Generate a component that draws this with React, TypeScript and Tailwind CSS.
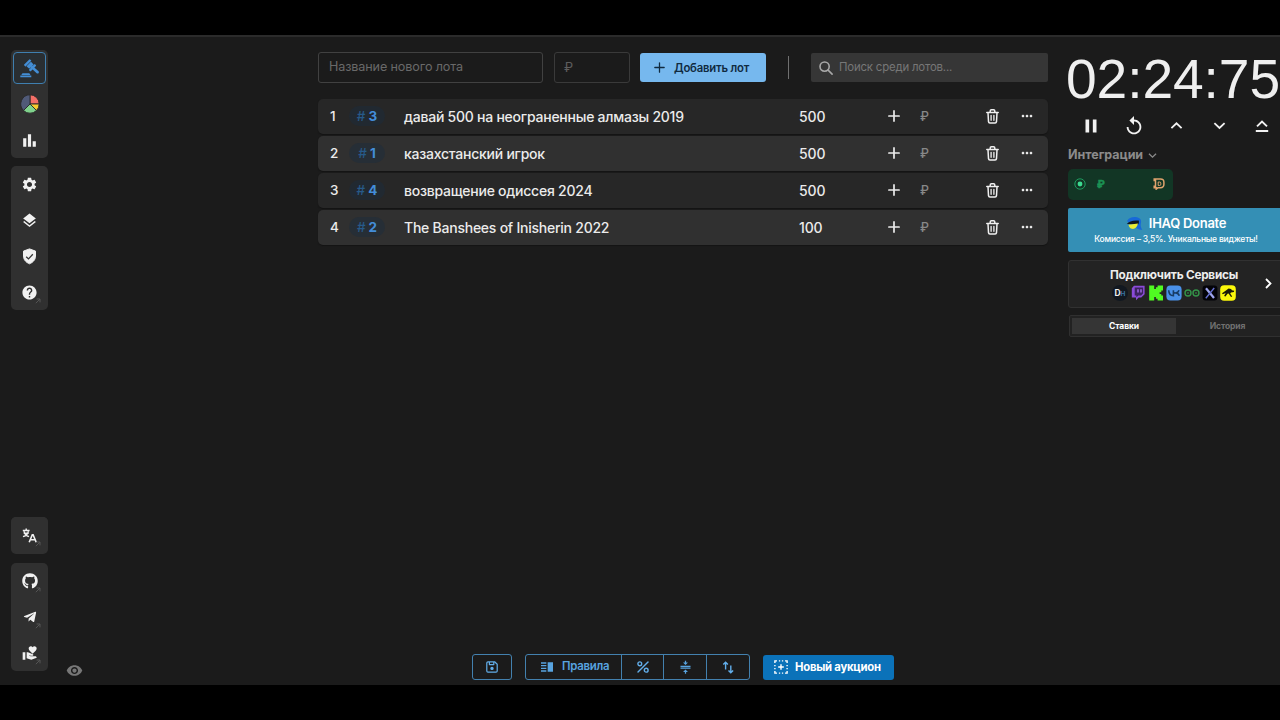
import React from "react";
import {
  MdBarChart, MdSettings, MdLayers, MdHelp, MdVolunteerActivism,
  MdVisibility, MdMoreHoriz, MdPause, MdReplay, MdVerticalSplit, MdCompress,
} from "react-icons/md";
import { FaGithub, FaTelegramPlane } from "react-icons/fa";

const lots = [
  { pos: 1, id: 3, name: "давай 500 на неограненные алмазы 2019", sum: 500 },
  { pos: 2, id: 1, name: "казахстанский игрок", sum: 500 },
  { pos: 3, id: 4, name: "возвращение одиссея 2024", sum: 500 },
  { pos: 4, id: 2, name: "The Banshees of Inisherin 2022", sum: 100 },
];

function GavelIcon() {
  return (
    <svg width="19" height="19" viewBox="0 0 19 19" fill="currentColor">
      <g transform="rotate(45 9.5 7)">
        <rect x="4.700" y="1.900" width="2.400" height="8.400" rx=".6" />
        <rect x="7.500" y="3" width="3.800" height="6.200" />
        <rect x="11.700" y="1.900" width="2.400" height="8.400" rx=".6" transform="translate(0 0)" />
      </g>
      <path d="m10.300 8.200 1.700-1.700 6.300 5.600c.8.800.7 1.600.2 2.100s-1.300.6-2.100-.1Z" />
      <path d="M2.500 14.300h6.800l1.200 1.600H1.300ZM.3 16.500h11v1.700H.3Z" />
    </svg>
  );
}

function TranslateIcon() {
  return (
    <svg width="15" height="15" viewBox="0 0 15 15" fill="none" stroke="currentColor" strokeWidth="1.400">
      <path d="M.8 2.500h6.800M4.200.5v2M2 3.300c.5 2.700 2.300 4.400 5 5.400M6.400 3.300c-.5 2.700-2.600 4.400-5.400 5.400M1.700 5.200h5" />
      <path d="M7.200 14.300 10.300 6.700h.8l3.100 7.600M8.200 11.800h5" strokeWidth="1.600" />
    </svg>
  );
}

function PieIcon() {
  return (
    <svg width="20" height="20" viewBox="0 0 20 20" stroke="#292929" strokeWidth="0.9">
      <path d="M10 10V.8A9.2 9.2 0 0 1 19.2 10Z" fill="#f36f67" />
      <path d="M10 10h9.2a9.2 9.2 0 0 1-2.7 6.5Z" fill="#f6cb2e" />
      <path d="M10 10l6.5 6.500a9.200 9.200 0 0 1-13 0Z" fill="#7fd28c" />
      <path d="M10 10L3.500 16.500A9.200 9.200 0 0 1 10 .8Z" fill="#505a78" />
    </svg>
  );
}

function ShieldIcon() {
  return (
    <svg width="15" height="17" viewBox="0 0 15 17">
      <path d="M7.500.9 13.500 3.100v5c0 3.500-2.400 6.300-6 7.700-3.600-1.400-6-4.200-6-7.700v-5Z" fill="#f1f1f1" stroke="#f1f1f1" strokeLinejoin="round" />
      <path d="m4.200 8.700 2.300 2.200 4.300-4.600" fill="none" stroke="#333" strokeWidth="1.300" />
    </svg>
  );
}

function PlusIcon({ size = 12, width = 1.700 }: { size?: number; width?: number }) {
  return (
    <svg className="shrink-0" width={size} height={size} viewBox="0 0 12 12" fill="none" stroke="currentColor" strokeWidth={width} strokeLinecap="round">
      <path d="M6 .9v10.200M.9 6h10.200" />
    </svg>
  );
}

function SearchIcon() {
  return (
    <svg width="14" height="14" viewBox="0 0 14 14" fill="none" stroke="#a8a8a8" strokeWidth="1.600" strokeLinecap="round">
      <circle cx="5.600" cy="5.600" r="4.600" />
      <path d="m9.100 9.100 4 4" />
    </svg>
  );
}

function Chevron({ up, size = 14, width = 2 }: { up?: boolean; size?: number; width?: number }) {
  return (
    <svg className="shrink-0" width={size} height={size} viewBox="0 0 14 14" fill="none" stroke="currentColor" strokeWidth={width}>
      <path d={up ? "m1.500 9.800 5.500-5.200 5.500 5.200" : "m1.500 4.400 5.500 5.200 5.500-5.200"} />
    </svg>
  );
}

function TrashIcon() {
  return (
    <svg className="shrink-0" width="13" height="15" viewBox="0 0 13 15" fill="none" stroke="#f0f0f0" strokeWidth="1.500" strokeLinecap="round" strokeLinejoin="round">
      <path d="M.8 3.500h11.400M4.200 3.300V2c0-.8.500-1.200 1.200-1.200h2.200c.7 0 1.200.4 1.200 1.200v1.300M2 3.700l.5 9c.1.900.6 1.400 1.400 1.400h5.200c.8 0 1.300-.5 1.400-1.400l.5-9" />
      <path d="M5.100 6.300v5M7.900 6.300v5" strokeWidth="1.300" />
    </svg>
  );
}

function SaveIcon() {
  return (
    <svg width="12" height="12" viewBox="0 0 12 12" fill="none" stroke="#62aeea" strokeWidth="1.200" strokeLinejoin="round">
      <path d="M2 .8h6.600l2.600 2.400V10c0 .8-.4 1.200-1.200 1.200H2c-.8 0-1.200-.4-1.200-1.200V2C.8 1.200 1.200.8 2 .8Z" />
      <path d="M3.400 1v2.600h4.400V1" />
      <circle cx="6" cy="7.400" r="1.100" fill="#62aeea" />
    </svg>
  );
}

function PercentIcon() {
  return (
    <svg width="12" height="12" viewBox="0 0 12 12" fill="none" stroke="#62aeea" strokeWidth="1.400" strokeLinecap="round">
      <path d="M11 1 1 11" />
      <circle cx="2.800" cy="2.800" r="1.900" />
      <circle cx="9.200" cy="9.200" r="1.900" />
    </svg>
  );
}

function SortIcon() {
  return (
    <svg width="12" height="13" viewBox="0 0 12 13" fill="none" stroke="#62aeea" strokeWidth="1.400">
      <path d="M3.600 8.400V1.400M1.300 3.600l2.300-2.400 2.300 2.400M8.800 4.600v7M6.500 9.400l2.300 2.400 2.300-2.400" />
    </svg>
  );
}

function SelectPlusIcon() {
  return (
    <svg width="14" height="14" viewBox="0 0 14 14" fill="none" stroke="#fff" strokeWidth="1.400">
      <path d="M.9 3V.9H3M11 .9h2.100V3M13.100 11v2.100H11M3 13.100H.9V11M4.900.9h1.300M7.900.9h1.300M4.900 13.100h1.300M7.900 13.100h1.300M.9 4.900v1.300M.9 7.900v1.300M13.100 4.900v1.300M13.100 7.900v1.300M7 4.200v5.600M4.200 7h5.600" />
    </svg>
  );
}

function TopIcon() {
  return (
    <svg width="14" height="14" viewBox="0 0 14 14" fill="none" stroke="#f2f2f2" strokeWidth="1.900">
      <path d="m2 7.400 5-4.800 5 4.800M.8 12h12.400" />
    </svg>
  );
}

function NavItem({ children, active, hint }: { children: React.ReactNode; active?: boolean; hint?: boolean }) {
  return (
    <button
      className={
        active
          ? "relative flex h-8 w-[33px] items-center justify-center rounded-[4px] border border-[#3f7fb0] bg-[#292e32] text-[#438ed6]"
          : "relative flex h-8 w-[33px] items-center justify-center text-[#f1f1f1]"
      }
    >
      {children}
      {hint && (
        <svg className="absolute right-[5px] bottom-[4px]" width="6" height="6" viewBox="0 0 6 6" fill="none" stroke="#555">
          <path d="M.8 5.200 5 1M1.600 1H5v3.400" />
        </svg>
      )}
    </button>
  );
}

function NavGroup({ children }: { children: React.ReactNode }) {
  return <div className="flex w-[37px] flex-col items-center gap-1 rounded-[5px] bg-[#303030] py-[2px]">{children}</div>;
}

function Sidebar() {
  return (
    <nav className="flex w-[59px] flex-col pt-[13px] pb-[14px] pl-[11px]">
      <NavGroup>
        <NavItem active><GavelIcon /></NavItem>
        <NavItem><PieIcon /></NavItem>
        <NavItem><MdBarChart size={19} /></NavItem>
      </NavGroup>
      <div className="mt-[8px]">
        <NavGroup>
          <NavItem><MdSettings size={17} /></NavItem>
          <NavItem><MdLayers size={17} /></NavItem>
          <NavItem><ShieldIcon /></NavItem>
          <NavItem hint><MdHelp size={17} /></NavItem>
        </NavGroup>
      </div>
      <div className="mt-auto mb-[9px] rounded-[5px] bg-[#303030] pb-px w-[37px]">
        <NavGroup><NavItem hint><TranslateIcon /></NavItem></NavGroup>
      </div>
      <NavGroup>
        <NavItem hint><FaGithub size={16} /></NavItem>
        <NavItem hint><FaTelegramPlane size={14} /></NavItem>
        <NavItem hint><MdVolunteerActivism size={16} /></NavItem>
      </NavGroup>
    </nav>
  );
}

function LotForm() {
  return (
    <div className="flex h-[31px] items-center text-[13px]">
      <div className="flex h-[31px] w-[225px] items-center rounded-[3px] border border-[#414141] pl-[10px] text-[12.600px] tracking-[-0.120px] text-[#696969]">Название нового лота</div>
      <div className="ml-[11px] flex h-[31px] w-[76px] items-center rounded-[3px] border border-[#3a3a3a] pt-px pl-[9px] text-[#5e5e5e]">₽</div>
      <button className="ml-[10px] flex h-[29px] w-[126px] items-center rounded-[3px] bg-[#76b8ee] pl-[14px] text-[11.300px] font-semibold tracking-[-0.200px] text-[#102a40]">
        <PlusIcon size={11} width={1.400} /><span className="ml-[9px] pt-px whitespace-nowrap">Добавить лот</span>
      </button>
      <div className="ml-[22px] h-[23px] w-px bg-[#707070]" />
      <div className="ml-[22px] flex h-[29px] w-[237px] items-center rounded-[2px] bg-[#363636] pl-[8px] text-[11.400px] tracking-[-0.180px] text-[#777]">
        <SearchIcon /><span className="ml-[6px]">Поиск среди лотов...</span>
      </div>
    </div>
  );
}

function LotRow({ lot, alt }: { lot: (typeof lots)[number]; alt: boolean }) {
  return (
    <li
      className={
        alt
          ? "flex h-[35px] items-center rounded-[5px] bg-[#303030] pb-px text-[14px] font-medium text-[#ebebeb] shadow-[0_1px_1px_#141414]"
          : "flex h-[35px] items-center rounded-[5px] bg-[#272727] pb-px text-[14px] font-medium text-[#ebebeb] shadow-[0_1px_1px_#141414]"
      }
    >
      <span className="w-[31px] pl-[12px] text-[13.500px]">{lot.pos}</span>
      <span className="flex h-5 w-[36px] items-center justify-center gap-[3px] rounded-full bg-[#1c2c3b]/50 text-[13.500px]">
        <span className="text-[#275a89]">#</span>
        <span className="font-bold text-[#438dd9]">{lot.id}</span>
      </span>
      <span className="ml-[19px] w-[395px] tracking-[-0.240px] whitespace-nowrap">{lot.name}</span>
      <span className="w-[89px] tracking-[-0.150px]">{lot.sum}</span>
      <PlusIcon />
      <span className="ml-[20px] w-[66px] pt-[2px] text-[12.500px] text-[#888]">₽</span>
      <TrashIcon />
      <MdMoreHoriz size={16} className="ml-[20px] shrink-0" />
    </li>
  );
}

function BottomBar() {
  return (
    <div className="mt-auto flex h-[26px] w-[422px] items-center self-center text-[12.500px] font-semibold text-[#58a4e0]">
      <button className="flex h-[26px] w-[40px] items-center justify-center rounded-[3px] border border-[#4381af]"><SaveIcon /></button>
      <div className="ml-[13px] flex h-[26px] w-[225px] divide-x divide-[#4381af] rounded-[3px] border border-[#4381af]">
        <button className="flex w-[96px] items-center pl-[13px]"><MdVerticalSplit size={16} /><span className="ml-[7px] text-[11.400px] tracking-[-0.250px]">Правила</span></button>
        <button className="flex w-[42px] items-center justify-center"><PercentIcon /></button>
        <button className="flex w-[43px] items-center justify-center"><MdCompress size={15} stroke="currentColor" strokeWidth={0} /></button>
        <button className="flex flex-1 items-center justify-center"><SortIcon /></button>
      </div>
      <button className="ml-[13px] flex h-[25px] w-[131px] items-center rounded-[3px] bg-[#0b72b9] pl-[11px] text-[11.300px] font-bold tracking-[-0.240px] text-white">
        <SelectPlusIcon /><span className="ml-[7px] whitespace-nowrap">Новый аукцион</span>
      </button>
    </div>
  );
}

function ServiceIcons() {
  return (
    <div className="flex items-center gap-[2px]">
      <svg width="16" height="16" viewBox="0 0 16 16"><circle cx="8" cy="8" r="8" fill="#121820" /><text x="2.500" y="11" fontSize="8.500" fontWeight="700" fontFamily="Inter, sans-serif" fill="#eee">D</text><text x="8.600" y="10.700" fontSize="6.500" fontWeight="700" fontFamily="Inter, sans-serif" fill="#3973a5">H</text></svg>
      <svg width="16" height="16" viewBox="0 0 16 16"><path d="M4 .8h10.600v8.500l-3.400 3.300H8.700L6 15.200v-2.600H1.800V3.200Z" fill="#8b4bd8" /><path d="M4.700 2.400h8.400v6.200l-2 1.900H8.400l-2 1.800v-1.800H4.700Z" fill="#3c2360" /><path d="M8 4.300v3.300M11 4.300v3.300" stroke="#a66bee" strokeWidth="1.400" /></svg>
      <svg width="16" height="16" viewBox="0 0 16 16"><path d="M1.200.5h5v3.400h1.700V2.200h1.700V.5H15v5h-1.700v1.700h-1.700v1.700h1.700v1.600H15v5H9.600v-1.700H7.900v-1.700H6.200v3.400h-5Z" fill="#50fa22" /></svg>
      <svg width="16" height="16" viewBox="0 0 16 16"><rect x=".4" y=".4" width="15.200" height="15.200" rx="4" fill="#4a91e9" /><path d="M2.700 5.200c.2 3.400 1.900 5.500 4.700 5.500V5.200M13 5.200c-.5 1.500-1.700 2.600-3 2.700-.8.1-1.700 0-2.600 0M10 7.900c1.500.1 2.700 1.300 3.300 2.900" fill="none" stroke="#183c65" strokeWidth="1.600" /></svg>
      <svg width="16" height="16" viewBox="0 0 16 16" fill="none" stroke="#349449" strokeWidth="1.400"><circle cx="4" cy="8" r="3" /><circle cx="12" cy="8" r="3" /><path d="M3 8h2M11 8h2" strokeWidth="1" /></svg>
      <svg width="16" height="16" viewBox="0 0 16 16"><rect x=".6" y=".6" width="14.800" height="14.800" rx="3" fill="#030308" /><path d="m4 3.200 8 9.800" stroke="#9fa6ef" strokeWidth="2.200" /><path d="m12.200 3-8.400 10.200" stroke="#6670d2" strokeWidth="1.400" /></svg>
      <svg width="16" height="16" viewBox="0 0 16 16"><rect x=".2" y=".2" width="15.600" height="15.600" rx="4" fill="#fbf80a" /><path d="M2 8.200 6.300 5.200 8.600 3.600l2.400.4 1 1.300 2.200.5-.3 1.100-2.900.5-.8 1 2 3-1.200.5-2.400-3.300-1.100.2-2 2.700-1.400-.4 1.600-3.200-2.900 1.400Z" fill="#1b1b08" /></svg>
    </div>
  );
}

function RightPanel() {
  return (
    <aside className="ml-[20px] flex w-[212px] shrink-0 flex-col">
      <div className="mt-[10px] -ml-[2px] h-[62px] w-[216px] font-['Liberation_Sans',sans-serif] text-[55.200px] leading-[64px] tracking-[-0.100px] whitespace-nowrap text-[#efefef]">02:24:75</div>
      <div className="mt-[4px] flex h-[25px] w-[212px] items-center text-[#f2f2f2]">
        <span className="ml-[2px] flex w-[42.500px] shrink-0 justify-center"><MdPause size={22} /></span>
        <span className="flex w-[42.700px] shrink-0 justify-center"><MdReplay size={22} /></span>
        <span className="flex w-[42.700px] shrink-0 justify-center"><Chevron up size={13} /></span>
        <span className="flex w-[42.700px] shrink-0 justify-center"><Chevron size={13} /></span>
        <span className="flex w-[42.700px] shrink-0 justify-center"><TopIcon /></span>
      </div>
      <div className="mt-[7px] flex h-[20px] items-center text-[12.500px] font-bold tracking-[-0.050px] text-[#8b8b8b]">
        Интеграции<span className="ml-[5px]"><Chevron size={9} width={2} /></span>
      </div>
      <div className="mt-[4px] flex h-[31px] w-[105px] items-center rounded-[5px] bg-[#123625] px-[6px] pb-px">
        <svg width="12" height="12" viewBox="0 0 12 12"><circle cx="6" cy="6" r="5.200" fill="none" stroke="#1e9a5e" /><circle cx="6" cy="6" r="2.400" fill="#3ddb91" /></svg>
        <span className="ml-[11px] pt-px text-[10.500px] font-bold text-[#1b9154] [-webkit-text-stroke:0.500px_#1b9154]">₽</span>
        <svg className="mr-[2px] ml-auto" width="12" height="12" viewBox="0 0 12 12" fill="none" stroke="#dfa26d" strokeWidth="1.500"><path d="M1.200 1.100h6.300c2.300 0 3.400 1.200 3.400 3.100v2.100c0 2-1.100 3.400-3.400 3.400H5L3.200 11.200V9.700h-2V8.300H2.500V2.500H1.200Z" /><path d="M5.200 4v3.500h1.300c.9 0 1.300-.4 1.300-1.200V5.200c0-.8-.4-1.200-1.300-1.200Z" strokeWidth="1" /></svg>
      </div>
      <div className="mt-[8px] flex h-[44px] w-[216px] flex-col items-center rounded-l-[2px] bg-[#348fb5] pt-[6px] text-white">
        <div className="flex h-[19px] items-center text-[13px] font-semibold tracking-[-0.280px]">
          <svg className="mr-[6px]" width="17" height="16" viewBox="0 0 17 16"><path d="M1 5C2.500 1.800 7 .3 11 1.200c3.500.8 4.800 3.300 3.800 6.300-.5 1.800 0 4.300 1.500 6.200-2.300.3-4.600-.3-6-1.900L4 8Z" fill="#1769d8" /><path d="M.8 8C3 5.300 7 4 12.800 4.600c.3 1.600.1 2.900-.7 4Z" fill="#101820" /><path d="M2.500 8.700 12 7.600c-.8 3.700-3.500 6-6.200 5.200-2-.6-2.900-2.200-3.300-4.100Z" fill="#e9ec34" /></svg>
          IHAQ Donate
        </div>
        <div className="text-[8.500px] leading-[12px] font-medium tracking-[-0.210px] whitespace-nowrap">Комиссия – 3,5%. Уникальные виджеты!</div>
      </div>
      <div className="mt-[8px] flex h-[48px] w-[216px] items-center rounded-l-[3px] border border-[#313131] bg-[#232323] pb-px">
        <div className="ml-[40px] flex w-[130px] flex-col items-center">
          <div className="mb-[2px] text-[11.800px] leading-[16px] font-bold tracking-[-0.240px] whitespace-nowrap text-[#ededed]">Подключить Сервисы</div>
          <ServiceIcons />
        </div>
        <svg className="ml-[26px] shrink-0" width="7" height="11" viewBox="0 0 7 11" fill="none" stroke="#fff" strokeWidth="1.800"><path d="m1 1 4.500 4.500L1 10" /></svg>
      </div>
      <div className="mt-[7px] ml-px flex h-[22px] w-[220px] items-center rounded-[2px] border border-[#303030] bg-[#222] pl-[2px] text-[8.500px] font-bold">
        <div className="flex h-[16px] w-[104px] items-center justify-center bg-[#353535] tracking-[-0.100px] text-white">Ставки</div>
        <div className="flex w-[103px] items-center justify-center tracking-[-0.100px] text-[#707070]">История</div>
      </div>
    </aside>
  );
}

export default function App() {
  return (
    <div className="flex h-[720px] w-[1280px] flex-col overflow-hidden bg-black pt-[35px] pb-[35px] font-['Inter',sans-serif]">
      <div className="flex h-[650px] overflow-hidden border-t-2 border-[#2b2b2b] bg-[#1b1b1b]">
        <Sidebar />
        <div className="flex w-[259px] shrink-0 flex-col justify-end pb-[6px] pl-[7px] text-[#777]">
          <MdVisibility size={17} />
        </div>
        <main className="flex w-[730px] shrink-0 flex-col pt-[15px] pb-[5px]">
          <LotForm />
          <ul className="mt-[16px] flex flex-col gap-[2px]">
            {lots.map((lot, i) => <LotRow key={lot.id} lot={lot} alt={i % 2 === 1} />)}
          </ul>
          <BottomBar />
        </main>
        <RightPanel />
      </div>
    </div>
  );
}
